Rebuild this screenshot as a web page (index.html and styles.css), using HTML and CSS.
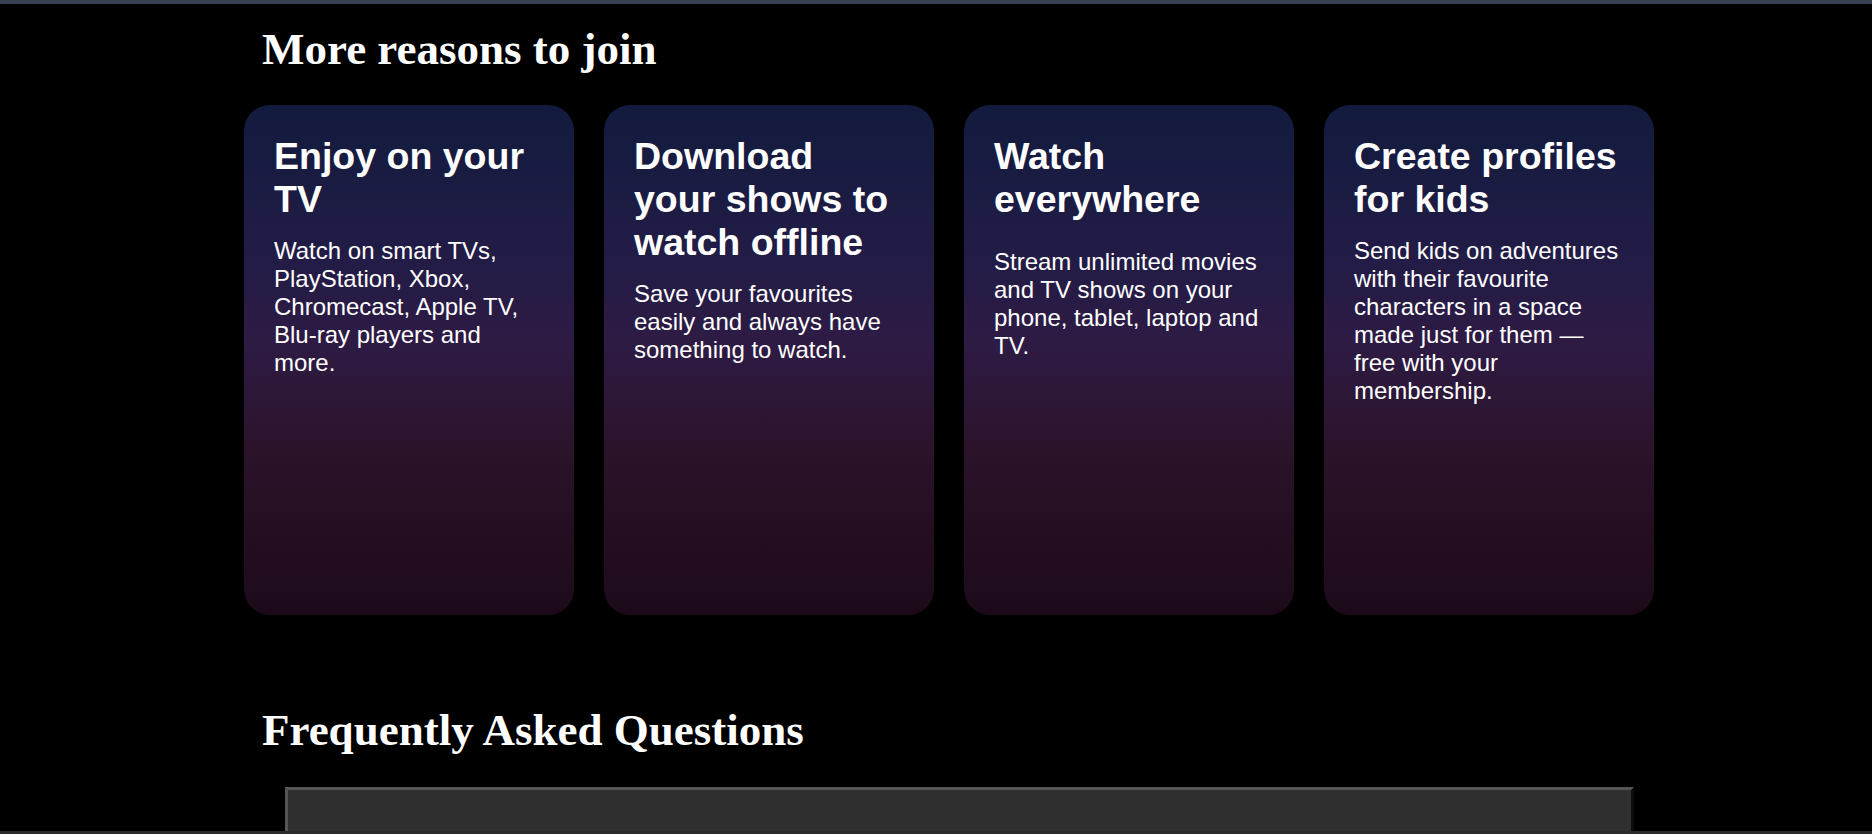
FILE: index.html
```html
<!DOCTYPE html>
<html>
<head>
    <title>More reasons to join</title>
    <link rel="stylesheet" href="styles.css">
</head>
<body>
    <div class="topbar"></div>

    <section class="reasons">
        <h2 class="section-title">More reasons to join</h2>
        <div class="cards">
            <div class="card">
                <h3 class="card-title">Enjoy on your TV</h3>
                <p class="card-text">Watch on smart TVs, PlayStation, Xbox, Chromecast, Apple TV, Blu-ray players and more.</p>
            </div>
            <div class="card">
                <h3 class="card-title">Download your shows to watch offline</h3>
                <p class="card-text">Save your favourites easily and always have something to watch.</p>
            </div>
            <div class="card">
                <h3 class="card-title">Watch everywhere</h3>
                <p class="card-text spaced">Stream unlimited movies and TV shows on your phone, tablet, laptop and TV.</p>
            </div>
            <div class="card">
                <h3 class="card-title">Create profiles for kids</h3>
                <p class="card-text">Send kids on adventures with their favourite characters in a space made just for them — free with your membership.</p>
            </div>
        </div>
    </section>

    <section class="faq">
        <h2 class="section-title">Frequently Asked Questions</h2>
        <div class="faq-list">
            <div class="faq-item"></div>
        </div>
    </section>

    <div class="bottombar"></div>
</body>
</html>
```

FILE: styles.css
```css
body {
    margin: 0;
    background-color: #000000;
    color: #ffffff;
    font-family: "Liberation Sans", Arial, sans-serif;
}

.topbar {
    height: 4px;
    background-color: #374151;
}

.bottombar {
    position: fixed;
    left: 0;
    right: 0;
    bottom: 0;
    height: 3px;
    background-color: #2b2b2b;
}

.section-title {
    font-family: "Liberation Serif", "Times New Roman", serif;
    font-size: 45px;
    font-weight: bold;
    line-height: 52px;
    margin: 0 0 30px 18px;
}

.reasons {
    padding: 19px 0 0 244px;
}

.cards {
    display: grid;
    grid-template-columns: repeat(4, 330px);
    gap: 30px;
}

.card {
    height: 510px;
    box-sizing: border-box;
    padding: 30px 34px 30px 30px;
    border-radius: 26px;
    background: linear-gradient(180deg, #121b3e 0%, #221c46 30%, #2e1b44 47%, #2b1329 68%, #1c0a19 100%);
}

.card-title {
    font-size: 37.5px;
    font-weight: bold;
    margin: 0 0 16px 0;
}

.card-text {
    font-size: 24px;
    margin: 0;
}

.card-text.spaced {
    margin-top: 27px;
}

.faq {
    padding: 89px 0 0 244px;
}

.faq .section-title {
    margin-bottom: 31px;
}

.faq-list {
    padding-left: 41px;
}

.faq-item {
    width: 1349px;
    height: 90px;
    box-sizing: border-box;
    background-color: #2f2f2f;
    border: 3px solid;
    border-color: #555555 #0d0d0d #0d0d0d #555555;
}
```
